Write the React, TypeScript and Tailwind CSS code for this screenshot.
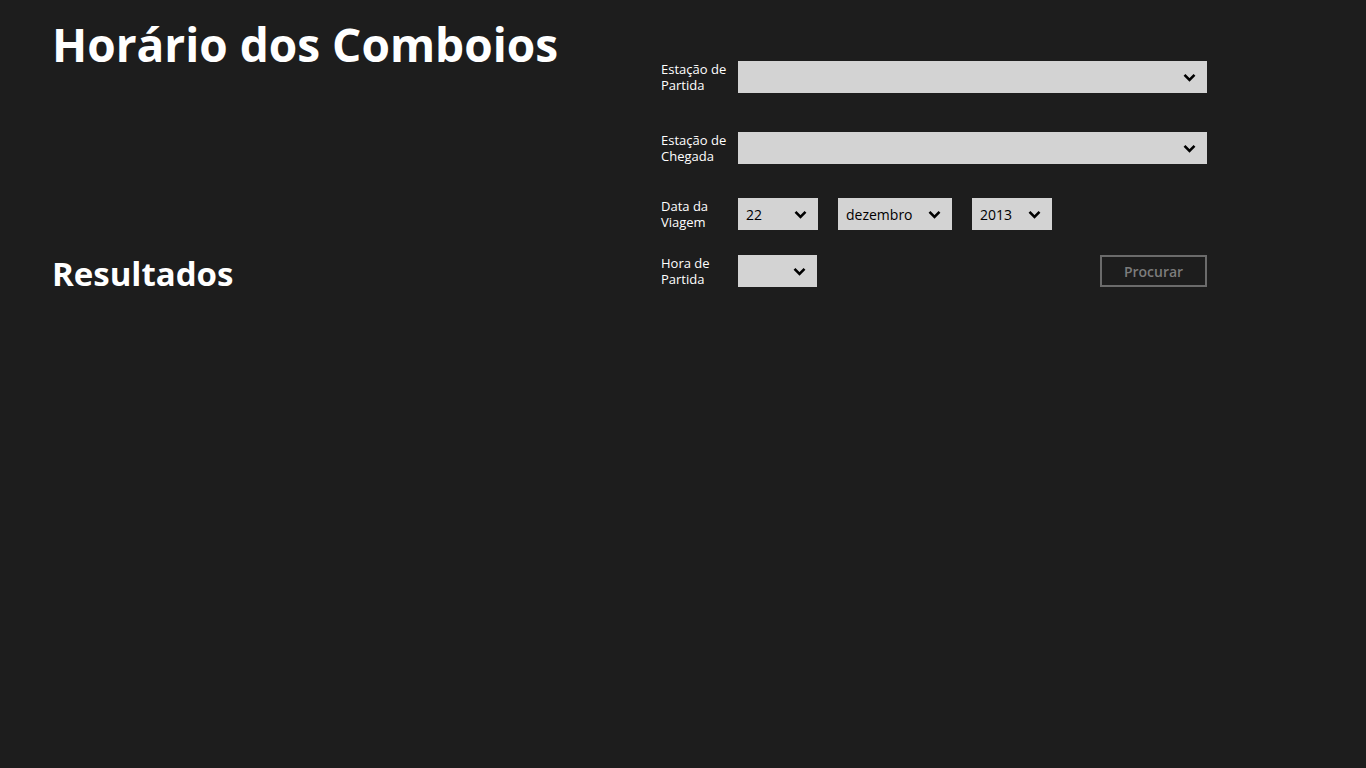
import React from 'react';

const font = { fontFamily: '"Open Sans", "Noto Sans", sans-serif' };

const Chevron = () => (
  <svg width="13" height="9" viewBox="0 0 13 9" className="shrink-0">
    <path d="M1.5 1.8 L6.5 6.8 L11.5 1.8" fill="none" stroke="#000" strokeWidth="2.6" />
  </svg>
);

const Select = ({ width, value }: { width: string; value?: string }) => (
  <div className={`${width} h-8 bg-[#d3d3d3] flex items-center justify-between pl-2 pr-[11px]`}>
    <span className="text-[14px] text-black">{value}</span>
    <Chevron />
  </div>
);

const Label = ({ top, bottom }: { top: string; bottom: string }) => (
  <div className="w-[77px] text-[13px] leading-[16px] text-white">
    <div>{top}</div>
    <div>{bottom}</div>
  </div>
);

export default function App() {
  return (
    <div className="w-full h-[768px] bg-[#1d1d1d] flex" style={font}>
      {/* Left */}
      <div className="w-[661px] shrink-0 pl-[52px]">
        <h1 className="mt-[14px] text-[46px] leading-[60px] font-bold text-white tracking-[0px]">
          Horário dos Comboios
        </h1>
        <h2 className="mt-[180px] text-[33px] leading-[40px] font-bold text-white tracking-[0px]">
          Resultados
        </h2>
      </div>

      {/* Form */}
      <div className="pt-[61px] w-[546px]">
        <div className="flex items-center">
          <Label top="Estação de" bottom="Partida" />
          <Select width="w-[469px]" />
        </div>
        <div className="flex items-center mt-[39px]">
          <Label top="Estação de" bottom="Chegada" />
          <Select width="w-[469px]" />
        </div>
        <div className="flex items-center mt-[34px]">
          <Label top="Data da" bottom="Viagem" />
          <div className="flex gap-5">
            <Select width="w-[80px]" value="22" />
            <Select width="w-[114px]" value="dezembro" />
            <Select width="w-[80px]" value="2013" />
          </div>
        </div>
        <div className="flex items-center mt-[25px]">
          <Label top="Hora de" bottom="Partida" />
          <Select width="w-[79px]" />
          <div className="flex-1" />
          <button className="w-[107px] h-8 border-2 border-[#6b6b6b] text-[#7c7c7c] text-[14px] font-semibold">
            Procurar
          </button>
        </div>
      </div>
    </div>
  );
}
